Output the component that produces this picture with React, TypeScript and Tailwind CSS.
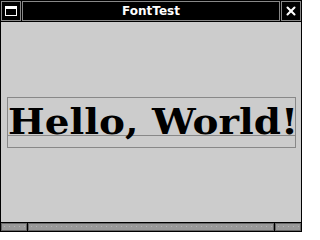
import { X } from 'lucide-react';

function Dotted({ className }: { className: string }) {
  return (
    <div
      className={`h-full border border-[#666] bg-[#999] bg-[radial-gradient(circle,#b4b4b4_0.8px,transparent_1px)] bg-[length:5px_5px] ${className}`}
    />
  );
}

export default function App() {
  return (
    <div className="flex h-[232px] w-[302px] flex-col bg-black">
      <div className="flex h-[22px] gap-px p-px">
        <div className="flex w-[20px] items-center justify-center border border-[#888]">
          <div className="h-[10px] w-[12px] border-[1.5px] border-t-[3px] border-white" />
        </div>
        <div className="flex flex-1 items-center justify-center border border-[#888]">
          <span className="font-['DejaVu_Sans'] text-[12px] font-bold leading-none text-white">FontTest</span>
        </div>
        <div className="flex w-[20px] items-center justify-center border border-[#888]">
          <X className="h-[14px] w-[14px] text-white" strokeWidth={3.5} />
        </div>
      </div>
      <div className="mx-px flex flex-1 items-start bg-[#cccccc] pt-[75px]">
        <div className="ml-[6px] flex h-[51px] w-[289px] flex-col border border-[#888]">
          <div className="h-[38px] overflow-visible border-b border-[#888]">
            <span className="block origin-left scale-x-[1.08] font-['DejaVu_Serif'] text-[36px] font-bold leading-[46px] whitespace-nowrap text-black">
              Hello, World!
            </span>
          </div>
        </div>
      </div>
      <div className="flex h-[10px] gap-px px-px pb-px pt-px">
        <Dotted className="w-[26px]" />
        <Dotted className="flex-1" />
        <Dotted className="w-[26px]" />
      </div>
    </div>
  );
}
